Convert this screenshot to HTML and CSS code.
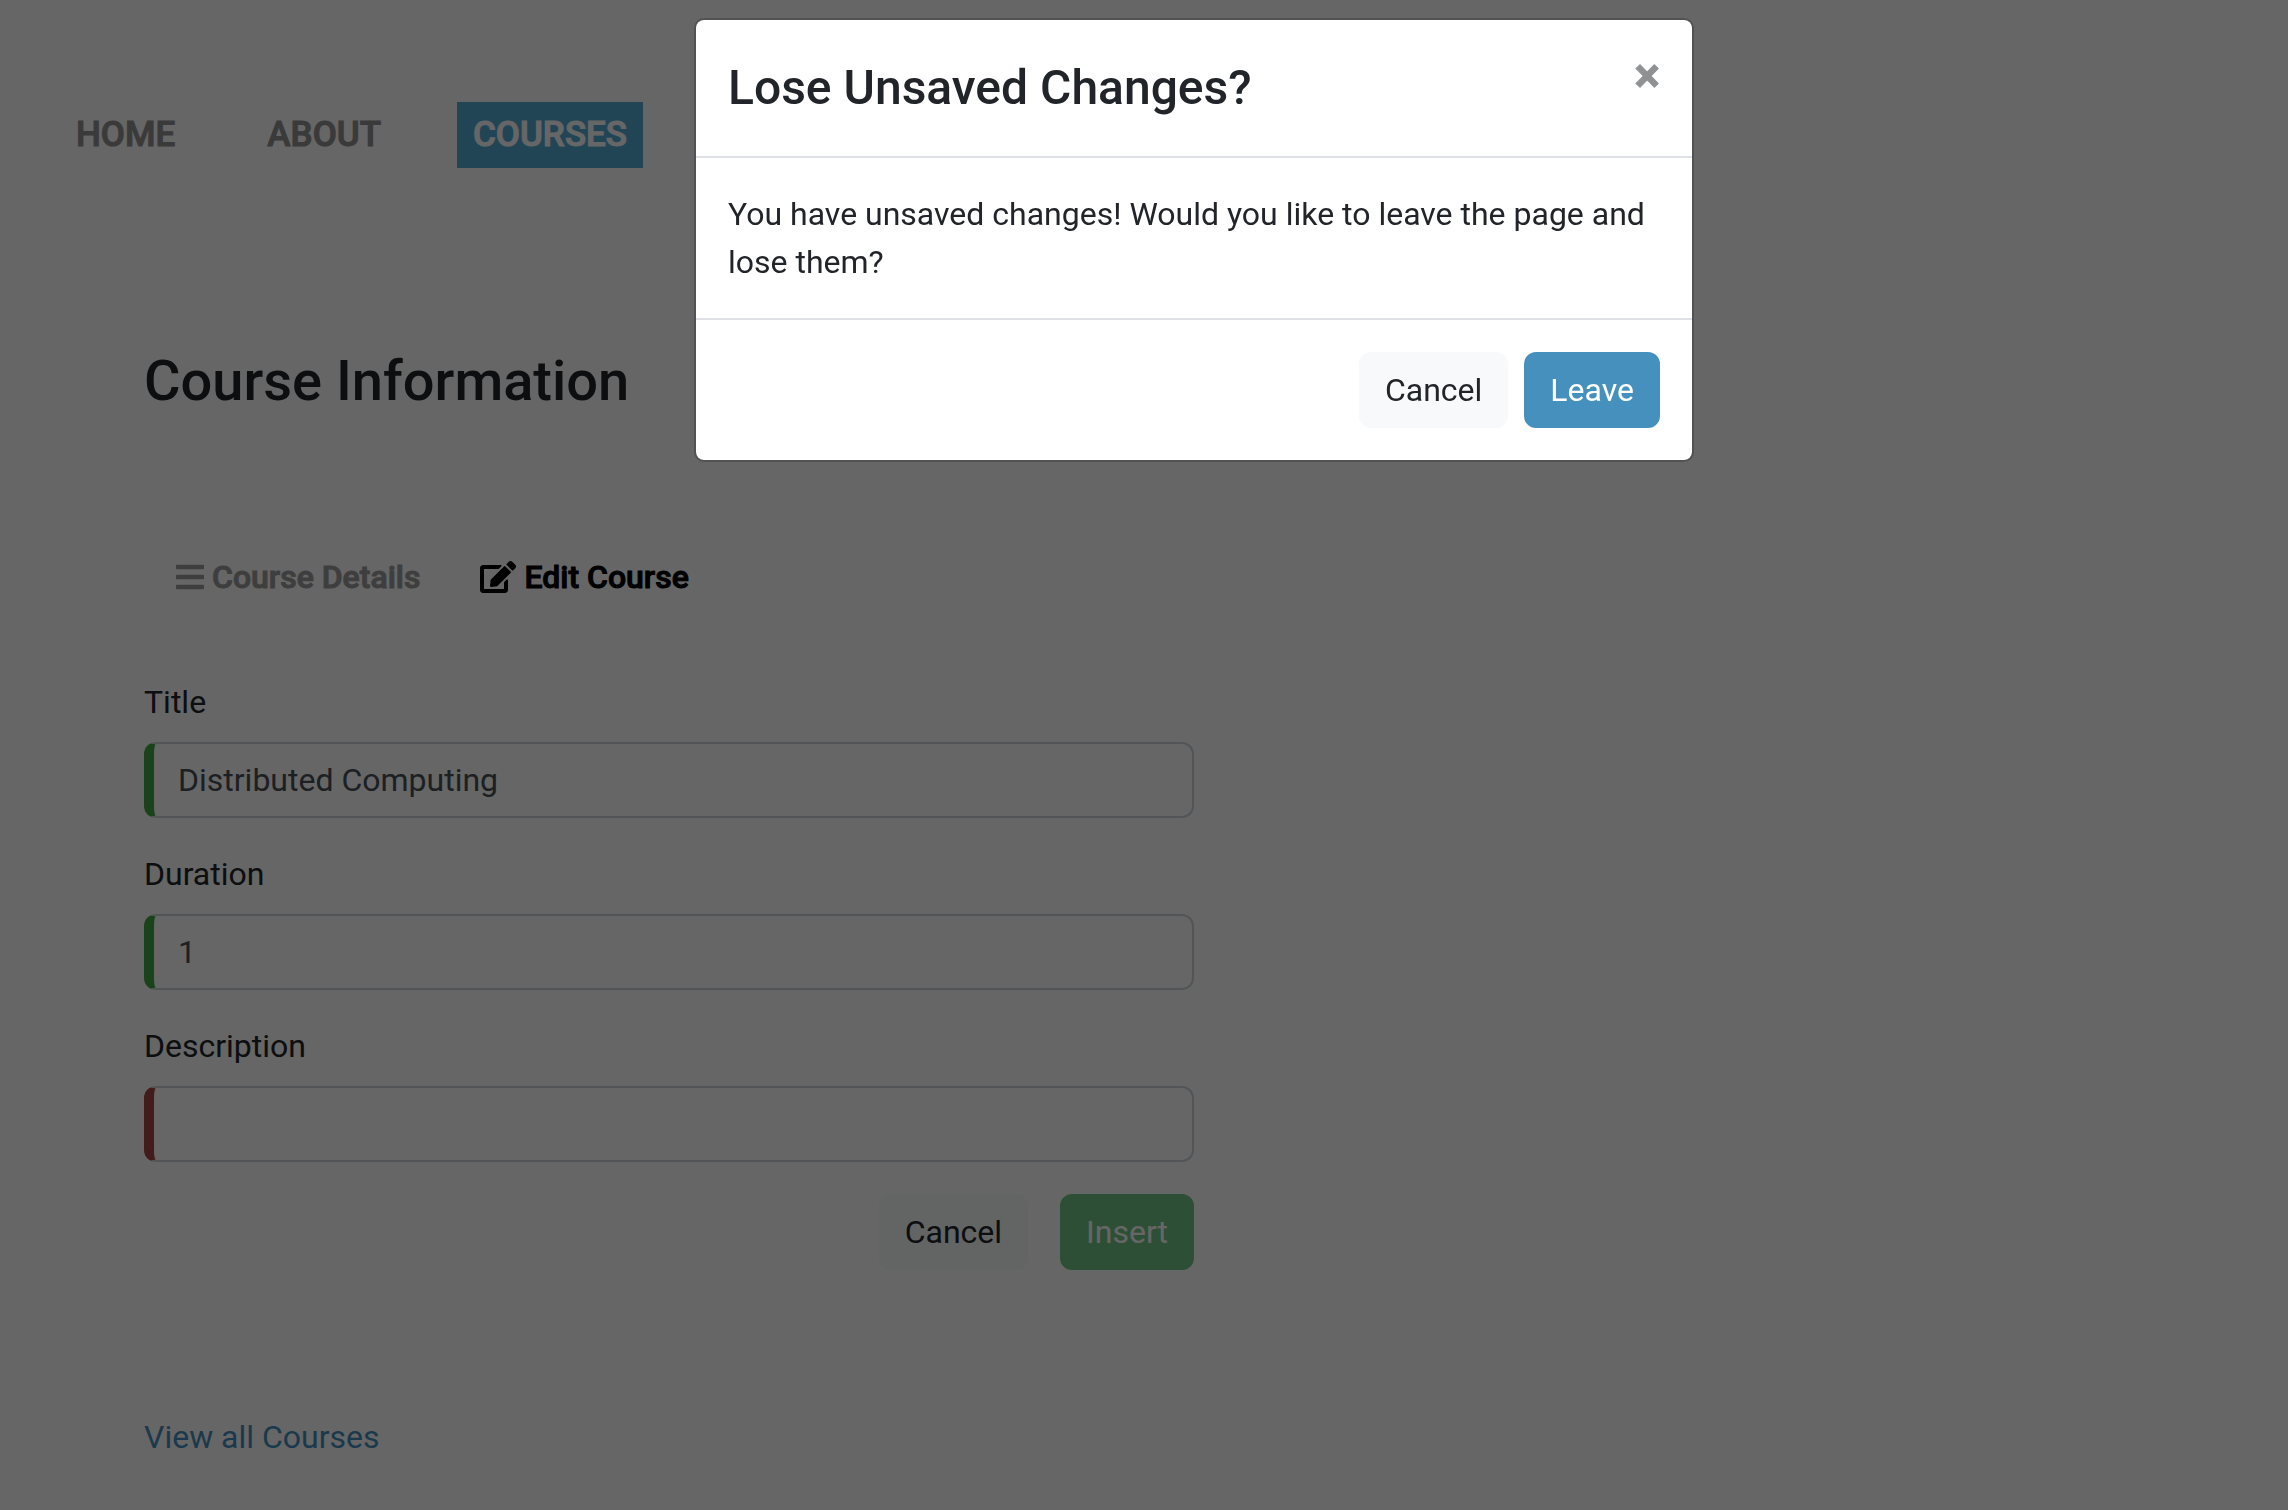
FILE: index.html
```html
<!DOCTYPE html>
<html lang="en">
<head>
<meta charset="utf-8">
<meta name="viewport" content="width=device-width, initial-scale=1">
<title>Course Information</title>
<link rel="stylesheet" href="styles.css">
</head>
<body>
<nav class="nav" aria-label="Main">
  <a class="nav-link" href="#home">HOME</a>
  <a class="nav-link" href="#about">ABOUT</a>
  <a class="nav-link active" href="#courses">COURSES</a>
</nav>
<main class="page">
  <h1 class="page-title">Course Information</h1>
  <div class="tabs">
    <a class="tab" href="#details">
      <svg class="icon-bars" viewBox="0 0 448 512" aria-hidden="true"><path d="M16 132h416c8.837 0 16-7.163 16-16V76c0-8.837-7.163-16-16-16H16C7.163 60 0 67.163 0 76v40c0 8.837 7.163 16 16 16zm0 160h416c8.837 0 16-7.163 16-16v-40c0-8.837-7.163-16-16-16H16c-8.837 0-16 7.163-16 16v40c0 8.837 7.163 16 16 16zm0 160h416c8.837 0 16-7.163 16-16v-40c0-8.837-7.163-16-16-16H16c-8.837 0-16 7.163-16 16v40c0 8.837 7.163 16 16 16z"/></svg>
      <span>Course Details</span>
    </a>
    <a class="tab active" href="#edit">
      <svg class="icon-edit" viewBox="0 0 576 512" aria-hidden="true"><path d="M402.6 83.2l90.2 90.2c3.8 3.8 3.8 10 0 13.8L274.400 405.600l-92.800 10.300c-12.400 1.400-22.900-9.100-21.500-21.500l10.300-92.800L388.800 83.200c3.800-3.800 10-3.800 13.800 0zm162-22.900l-48.800-48.800c-15.200-15.200-39.900-15.200-55.200 0l-35.400 35.400c-3.800 3.800-3.800 10 0 13.800l90.200 90.200c3.800 3.800 10 3.800 13.800 0l35.400-35.400c15.200-15.300 15.200-40 0-55.200zM384 346.200V448H64V128h229.800c3.200 0 6.200-1.300 8.500-3.500l40-40c7.600-7.600 2.200-20.500-8.500-20.500H48C21.500 64 0 85.500 0 112v352c0 26.500 21.500 48 48 48h352c26.500 0 48-21.500 48-48V306.200c0-10.700-12.900-16-20.500-8.500l-40 40c-2.200 2.300-3.500 5.300-3.500 8.500z"/></svg>
      <span>Edit Course</span>
    </a>
  </div>
  <form class="form">
    <div class="field">
      <label for="title">Title</label>
      <input class="input valid" id="title" type="text" value="Distributed Computing">
    </div>
    <div class="field">
      <label for="duration">Duration</label>
      <input class="input valid" id="duration" type="text" value="1">
    </div>
    <div class="field">
      <label for="description">Description</label>
      <input class="input invalid" id="description" type="text">
    </div>
    <div class="form-actions">
      <button class="btn btn-light" type="button">Cancel</button>
      <button class="btn btn-success" type="submit" disabled>Insert</button>
    </div>
  </form>
  <a class="all-link" href="#all">View all Courses</a>
</main>
<div class="backdrop">
  <section class="modal" role="dialog" aria-modal="true" aria-labelledby="modal-title">
    <header class="modal-header">
      <h2 class="modal-title" id="modal-title">Lose Unsaved Changes?</h2>
      <button class="close" type="button" aria-label="Close">×</button>
    </header>
    <p class="modal-body">You have unsaved changes! Would you like to leave the page and lose them?</p>
    <footer class="modal-footer">
      <button class="btn btn-light" type="button">Cancel</button>
      <button class="btn btn-primary" type="button">Leave</button>
    </footer>
  </section>
</div>
</body>
</html>
```
FILE: styles.css
```css
* {
  box-sizing: border-box;
}

body {
  margin: 0;
  background: #fff;
  color: #212529;
  font-family: Roboto, "Liberation Sans", sans-serif;
  font-size: 32px;
  line-height: 48px;
}

a {
  text-decoration: none;
}

.nav {
  display: flex;
  gap: 60px;
  padding: 102px 60px 0;
}

.nav-link {
  padding: 6px 16px;
  color: #919191;
  font-size: 35px;
  font-weight: 500;
  line-height: 54px;
  -webkit-text-stroke: 1px currentColor;
}

.nav-link.active {
  background: #55acd8;
  color: #fff;
}

.page {
  padding: 179px 144px 48px;
}

.page-title {
  margin: 0 0 138px;
  font-size: 56px;
  font-weight: 500;
  line-height: 68px;
}

.tabs {
  display: flex;
  gap: 60px;
  margin-bottom: 77px;
  padding-left: 32px;
}

.tab {
  display: flex;
  align-items: center;
  gap: 8px;
  color: #9c9c9c;
  font-weight: 500;
  -webkit-text-stroke: 1px currentColor;
}

.tab.active {
  color: #000;
}

.icon-bars,
.icon-edit {
  height: 32px;
  fill: currentColor;
}

.icon-bars {
  width: 28px;
}

.icon-edit {
  width: 36px;
}

.form {
  max-width: 1050px;
  margin-bottom: 143px;
}

.field {
  display: flex;
  flex-direction: column;
  gap: 16px;
  margin-bottom: 32px;
}

.input {
  width: 100%;
  height: 76px;
  padding: 12px 24px;
  border: 2px solid #ced4da;
  border-left-width: 10px;
  border-radius: 12px;
  background: #fff;
  color: #495057;
  font: inherit;
}

.input.valid {
  border-left-color: #42a948;
}

.input.invalid {
  border-left-color: #a94442;
}

.form-actions {
  display: flex;
  justify-content: flex-end;
  gap: 32px;
}

.btn {
  padding: 12px 24px;
  border: 2px solid transparent;
  border-radius: 12px;
  font: inherit;
}

.btn-light {
  border-color: #f8f9fa;
  background: #f8f9fa;
  color: #212529;
}

.btn-success {
  border-color: #28a745;
  background: #28a745;
  color: #fff;
}

.btn-primary {
  border-color: #4590bd;
  background: #4590bd;
  color: #fff;
}

.btn:disabled {
  opacity: 0.65;
}

.all-link {
  color: #4590bd;
}

.backdrop {
  position: fixed;
  inset: 0;
  padding: 18px 0 0 100px;
  background: rgba(0, 0, 0, 0.6);
}

.modal {
  max-width: 1000px;
  margin: 0 auto;
  border: 2px solid rgba(0, 0, 0, 0.2);
  border-radius: 10px;
  background: #fff;
  background-clip: padding-box;
}

.modal-header {
  display: flex;
  align-items: flex-start;
  justify-content: space-between;
  padding: 32px;
  border-bottom: 2px solid #dee2e6;
}

.modal-title {
  margin: 0;
  font-size: 48px;
  font-weight: 500;
  line-height: 72px;
}

.close {
  padding: 0;
  border: 0;
  background: none;
  color: #212529;
  font: 700 48px/48px Roboto, "Liberation Sans", sans-serif;
  opacity: 0.5;
  -webkit-text-stroke: 1px currentColor;
}

.modal-body {
  margin: 0;
  padding: 32px;
}

.modal-footer {
  display: flex;
  justify-content: flex-end;
  gap: 16px;
  padding: 32px;
  border-top: 2px solid #dee2e6;
}
```
